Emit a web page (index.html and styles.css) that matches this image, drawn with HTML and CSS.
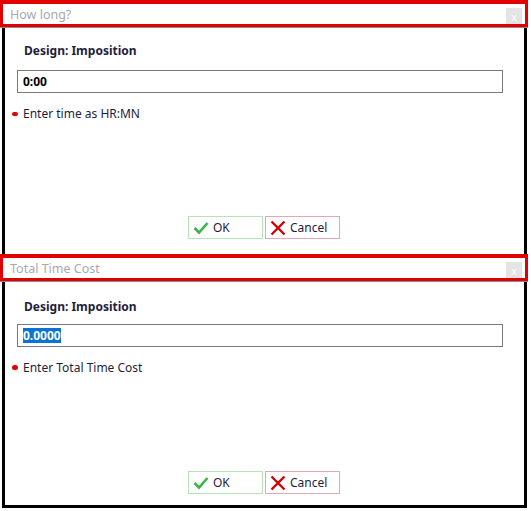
FILE: index.html
```html
<!DOCTYPE html>
<html lang="en">

<head>
    <meta charset="UTF-8">
    <meta name="viewport" content="width=device-width, initial-scale=1.0">
    <title>Dialogs</title>
    <link rel="stylesheet" href="styles.css">
</head>

<body>
    <div class="dialog">
        <div class="titlebar">
            <span class="title">How long?</span>
            <span class="close">x</span>
        </div>
        <div class="content">
            <div class="label">Design: Imposition</div>
            <div class="field"><span class="value">0:00</span></div>
            <div class="hint"><span class="dot"></span>Enter time as HR:MN</div>
            <div class="buttons">
                <button class="btn btn-ok">
                    <svg width="16" height="14" viewBox="0 0 16 14"><path d="M1.5 7 L6 11.5 L14.5 2" fill="none" stroke="#3bb54a" stroke-width="2.6"/></svg>
                    OK
                </button>
                <button class="btn btn-cancel">
                    <svg width="16" height="16" viewBox="0 0 16 16"><path d="M1.5 1.5 L14.5 14.5 M14.5 1.5 L1.5 14.5" fill="none" stroke="#d60000" stroke-width="2.4"/></svg>
                    Cancel
                </button>
            </div>
        </div>
    </div>
    <div class="dialog dialog-last">
        <div class="titlebar">
            <span class="title">Total Time Cost</span>
            <span class="close">x</span>
        </div>
        <div class="content">
            <div class="label">Design: Imposition</div>
            <div class="field"><span class="value selected">0.0000</span></div>
            <div class="hint"><span class="dot"></span>Enter Total Time Cost</div>
            <div class="buttons">
                <button class="btn btn-ok">
                    <svg width="16" height="14" viewBox="0 0 16 14"><path d="M1.5 7 L6 11.5 L14.5 2" fill="none" stroke="#3bb54a" stroke-width="2.6"/></svg>
                    OK
                </button>
                <button class="btn btn-cancel">
                    <svg width="16" height="16" viewBox="0 0 16 16"><path d="M1.5 1.5 L14.5 14.5 M14.5 1.5 L1.5 14.5" fill="none" stroke="#d60000" stroke-width="2.4"/></svg>
                    Cancel
                </button>
            </div>
        </div>
    </div>
</body>

</html>
```

FILE: styles.css
```css
* {
    margin: 0;
    padding: 0;
    box-sizing: border-box;
}

body {
    width: 531px;
    height: 511px;
    background: #fff;
    font-family: "Noto Sans", "Open Sans", sans-serif;
    font-size: 12px;
    color: #1e1e3c;
    overflow: hidden;
}

/* 标题栏，外面是红色的框 */
.titlebar {
    display: flex;
    align-items: flex-end;
    justify-content: space-between;
    width: 528px;
    height: 27px;
    border: 3px solid #e30000;
    border-top-width: 4px;
    box-shadow: 0 1px 0 #8a8a8a;
    padding-left: 7px;
}

.title {
    align-self: center;
    color: #a8a8b0;
    font-size: 12.5px;
    margin-top: 1px;
}

.close {
    display: flex;
    width: 16px;
    height: 16px;
    margin-right: 3px;
    background: #e4e4e4;
    color: #fff;
    font-size: 11px;
    align-items: center;
    justify-content: center;
    line-height: 1;
}

.content {
    display: flex;
    flex-direction: column;
    width: 525px;
    height: 226px;
    margin-left: 2px;
    margin-top: 1px;
    border-left: 3px solid #000;
    border-right: 3px solid #000;
    padding: 14px 0 0 12px;
}

/* 第二个对话框底部有黑边 */
.dialog-last .content {
    height: 226px;
    padding-top: 16px;
    border-bottom: 3px solid #000;
}

.label {
    padding-left: 7px;
    font-weight: bold;
    height: 17px;
    line-height: 17px;
}

.field {
    display: flex;
    align-items: center;
    width: 486px;
    height: 23px;
    margin-top: 11px;
    border: 1px solid #7a7a7a;
    padding-left: 5px;
    font-weight: bold;
    color: #000;
}

.dialog-last .field {
    margin-top: 9px;
}

.selected {
    background: #0a74d6;
    color: #fff;
    line-height: 15px;
}

.hint {
    display: flex;
    align-items: center;
    margin-top: 12px;
    margin-left: -5px;
    height: 17px;
}

.dot {
    width: 6px;
    height: 4px;
    border-radius: 3px;
    background: #e30000;
    margin-right: 5px;
}

.dialog-last .dot {
    width: 6px;
    height: 5px;
}

.buttons {
    display: flex;
    gap: 2px;
    margin-top: 94px;
    padding-left: 171px;
}

.dialog-last .buttons {
    margin-top: 95px;
}

.btn {
    display: flex;
    align-items: center;
    gap: 4px;
    width: 75px;
    height: 23px;
    background: #fff;
    font-family: inherit;
    font-size: 12px;
    color: #1e1e3c;
    padding-left: 4px;
}

.btn-ok {
    border: 1px solid #b6e2b6;
}

.btn-cancel {
    border: 1px solid #e2aab0;
}
```
